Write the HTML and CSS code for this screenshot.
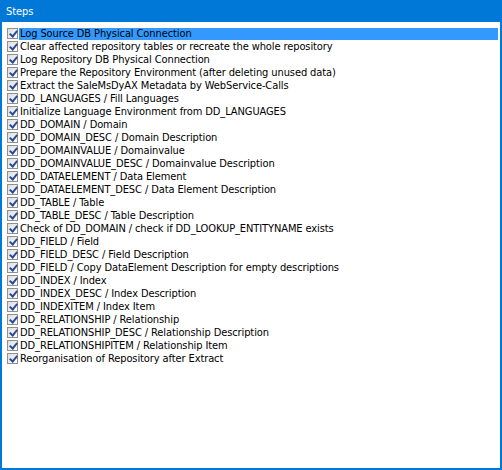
FILE: index.html
```html
<!DOCTYPE html>
<html>
<head>
<meta charset="utf-8">
<link rel="stylesheet" href="styles.css">
</head>
<body>
<div class="panel">
  <div class="header">Steps</div>
  <ul class="list">
    <li class="row selected"><span class="cb"></span><span class="label">Log Source DB Physical Connection</span></li>
    <li class="row"><span class="cb"></span><span class="label">Clear affected repository tables or recreate the whole repository</span></li>
    <li class="row"><span class="cb"></span><span class="label">Log Repository DB Physical Connection</span></li>
    <li class="row"><span class="cb"></span><span class="label">Prepare the Repository Environment (after deleting unused data)</span></li>
    <li class="row"><span class="cb"></span><span class="label">Extract the SaleMsDyAX Metadata by WebService-Calls</span></li>
    <li class="row"><span class="cb"></span><span class="label">DD_LANGUAGES / Fill Languages</span></li>
    <li class="row"><span class="cb"></span><span class="label">Initialize Language Environment from DD_LANGUAGES</span></li>
    <li class="row"><span class="cb"></span><span class="label">DD_DOMAIN / Domain</span></li>
    <li class="row"><span class="cb"></span><span class="label">DD_DOMAIN_DESC / Domain Description</span></li>
    <li class="row"><span class="cb"></span><span class="label">DD_DOMAINVALUE / Domainvalue</span></li>
    <li class="row"><span class="cb"></span><span class="label">DD_DOMAINVALUE_DESC / Domainvalue Description</span></li>
    <li class="row"><span class="cb"></span><span class="label">DD_DATAELEMENT / Data Element</span></li>
    <li class="row"><span class="cb"></span><span class="label">DD_DATAELEMENT_DESC / Data Element Description</span></li>
    <li class="row"><span class="cb"></span><span class="label">DD_TABLE / Table</span></li>
    <li class="row"><span class="cb"></span><span class="label">DD_TABLE_DESC / Table Description</span></li>
    <li class="row"><span class="cb"></span><span class="label">Check of DD_DOMAIN / check if DD_LOOKUP_ENTITYNAME exists</span></li>
    <li class="row"><span class="cb"></span><span class="label">DD_FIELD / Field</span></li>
    <li class="row"><span class="cb"></span><span class="label">DD_FIELD_DESC / Field Description</span></li>
    <li class="row"><span class="cb"></span><span class="label">DD_FIELD / Copy DataElement Description for empty descriptions</span></li>
    <li class="row"><span class="cb"></span><span class="label">DD_INDEX / Index</span></li>
    <li class="row"><span class="cb"></span><span class="label">DD_INDEX_DESC / Index Description</span></li>
    <li class="row"><span class="cb"></span><span class="label">DD_INDEXITEM / Index Item</span></li>
    <li class="row"><span class="cb"></span><span class="label">DD_RELATIONSHIP / Relationship</span></li>
    <li class="row"><span class="cb"></span><span class="label">DD_RELATIONSHIP_DESC / Relationship Description</span></li>
    <li class="row"><span class="cb"></span><span class="label">DD_RELATIONSHIPITEM / Relationship Item</span></li>
    <li class="row"><span class="cb"></span><span class="label">Reorganisation of Repository after Extract</span></li>
  </ul>
</div>
</body>
</html>
```
FILE: styles.css
```css
html, body {
  margin: 0;
  padding: 0;
  background: #ffffff;
}
.panel {
  box-sizing: border-box;
  width: 502px;
  height: 470px;
  border: 2px solid #0078d7;
  background: #ffffff;
  font-family: "DejaVu Sans Condensed", "DejaVu Sans", sans-serif;
  font-size: 11px;
  letter-spacing: -0.1px;
  color: #000000;
}
.header {
  height: 20px;
  background: #0078d7;
  color: #ffffff;
  padding-left: 4px;
  line-height: 20px;
  font-size: 11px;
}
.list {
  list-style: none;
  margin: 0;
  padding: 5px 2px 0 0;
}
.row {
  display: flex;
  align-items: center;
  height: 13px;
}
.cb {
  box-sizing: border-box;
  flex: none;
  width: 11px;
  height: 11px;
  margin-left: 5px;
  margin-right: 1px;
  border: 1px solid #8e8f8f;
  background: linear-gradient(135deg, #dcdcdc, #ffffff);
  position: relative;
}
.cb::after {
  content: "";
  position: absolute;
  left: 3px;
  top: 0px;
  width: 3px;
  height: 6px;
  border-right: 2px solid #2a4c96;
  border-bottom: 2px solid #2a4c96;
  transform: rotate(40deg);
}
.label {
  flex: 1;
  height: 12px;
  line-height: 12px;
  padding-left: 1px;
  white-space: nowrap;
}
.selected .label {
  background: #3399ff;
}
```
